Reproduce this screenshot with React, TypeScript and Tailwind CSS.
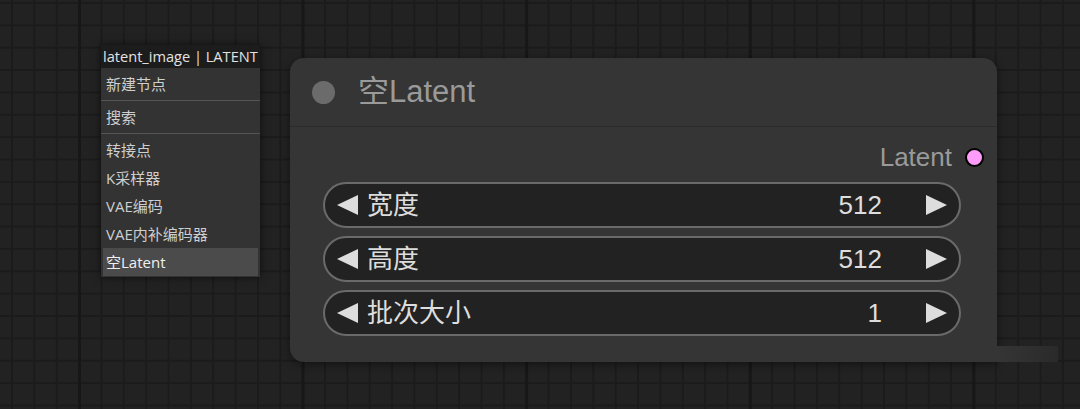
import React from 'react';

const MENU_FONT = { fontFamily: '"Open Sans", "Noto Sans CJK SC", sans-serif' };
const NODE_FONT = { fontFamily: '"Liberation Sans", "Noto Sans CJK SC", sans-serif' };

const menuGroups: string[][] = [
  ['新建节点'],
  ['搜索'],
  ['转接点', 'K采样器', 'VAE编码', 'VAE内补编码器', '空Latent'],
];

const widgets = [
  { label: '宽度', value: '512' },
  { label: '高度', value: '512' },
  { label: '批次大小', value: '1' },
];

export default function App() {
  return (
    <div className="relative w-[1080px] h-[409px] overflow-hidden bg-[#222222] [background-image:linear-gradient(to_right,#171717_3px,transparent_3px),linear-gradient(to_right,#1b1b1b_2px,transparent_2px),linear-gradient(to_bottom,#1b1b1b_2px,transparent_2px)] [background-size:223.6px_100%,22.36px_100%,100%_22.36px] [background-position:78px_0,11px_0,0_2px]">
      {/* 右键菜单 */}
      <div
        className="absolute left-[101px] top-[45px] w-[159px] shadow-[0_0_8px_rgba(0,0,0,0.6)]"
        style={MENU_FONT}
      >
        <div className="h-[23px] bg-[#1c1c1c] pl-[2px] text-[14.6px] leading-[23px] text-[#e2e2e2] whitespace-nowrap">
          latent_image | LATENT
        </div>
        <div className="bg-[#333333] pt-[2px] pb-px">
          {menuGroups.map((group, gi) => (
            <div key={gi}>
              {gi > 0 && <div className="my-[2px] h-px bg-[#555555]" />}
              {group.map((item) => (
                <MenuItem key={item} text={item} active={item === '空Latent'} />
              ))}
            </div>
          ))}
        </div>
      </div>

      {/* 节点 */}
      <div
        className="absolute left-[290px] top-[58px] w-[707px] h-[304px] rounded-[14px] rounded-br-none bg-[#353535] shadow-[0_2px_10px_rgba(0,0,0,0.45)] flex flex-col"
        style={NODE_FONT}
      >
        <div className="h-[69px] flex items-center pl-[22px] gap-[23px] border-b border-[#2b2b2b]">
          <span className="w-[23px] h-[23px] rounded-full bg-[#6b6b6b]" />
          <span className="text-[31px] text-[#9a9a9a]">空Latent</span>
        </div>

        <div className="flex items-center justify-end gap-[13px] pr-[13px] mt-[17px] h-[26px]">
          <span className="text-[26px] text-[#9a9a9a]">Latent</span>
          <span className="w-[19px] h-[19px] rounded-full bg-[#ff9cf9] border-2 border-black" />
        </div>

        <div className="mt-[12px] ml-[33px] mr-[36px] flex flex-col gap-[8px]">
          {widgets.map((w) => (
            <NumberWidget key={w.label} label={w.label} value={w.value} />
          ))}
        </div>
      </div>
      <div className="absolute left-[997px] top-[346px] w-[61px] h-[16px] bg-gradient-to-r from-[#353535] to-[#2a2a2a]" />
    </div>
  );
}

function MenuItem({ text, active }: { text: string; active?: boolean }) {
  return (
    <div
      className={`h-[28px] mx-[2px] pl-[3px] flex items-center text-[15px] whitespace-nowrap ${
        active ? 'bg-[#4b4b4b] text-[#f0f0f0]' : 'text-[#cfcfcf]'
      }`}
    >
      {text}
    </div>
  );
}

function Arrow({ dir }: { dir: 'left' | 'right' }) {
  return (
    <svg width="21" height="20" viewBox="0 0 21 20" className="flex-shrink-0">
      {dir === 'left' ? (
        <polygon points="21,0 21,20 0,10" fill="#dddddd" />
      ) : (
        <polygon points="0,0 0,20 21,10" fill="#dddddd" />
      )}
    </svg>
  );
}

function NumberWidget({ label, value }: { label: string; value: string }) {
  return (
    <div className="h-[46px] rounded-full border-2 border-[#6a6a6a] bg-[#222222] flex items-center pl-[12px] pr-[12px] text-[26px] text-[#dddddd]">
      <Arrow dir="left" />
      <span className="ml-[9px]">{label}</span>
      <span className="ml-auto">{value}</span>
      <span className="ml-[44px] flex">
        <Arrow dir="right" />
      </span>
    </div>
  );
}
